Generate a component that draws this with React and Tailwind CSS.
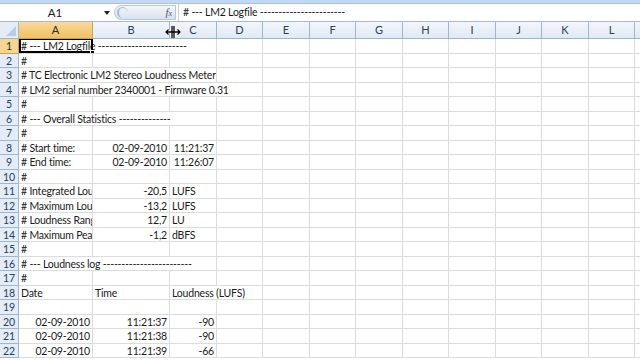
import React from 'react';

const colWidths = [74, 77, 47, 46, 47, 46, 47, 46, 47, 46, 47, 46, 40];
const colNames = ['A', 'B', 'C', 'D', 'E', 'F', 'G', 'H', 'I', 'J', 'K', 'L', ''];

// each row: list of cells { t, span, right }
const rows = [
  [{ t: '# --- LM2 Logfile ------------------------', span: 3, sel: true }],
  [{ t: '#' }],
  [{ t: '# TC Electronic LM2 Stereo Loudness Meter', span: 3 }],
  [{ t: '# LM2 serial number 2340001 - Firmware 0.31', span: 4 }],
  [{ t: '#' }],
  [{ t: '# --- Overall Statistics --------------', span: 3 }],
  [{ t: '#' }],
  [{ t: '# Start time:' }, { t: '02-09-2010', right: true }, { t: '11:21:37', right: true }],
  [{ t: '# End time:' }, { t: '02-09-2010', right: true }, { t: '11:26:07', right: true }],
  [{ t: '#' }],
  [{ t: '# Integrated Loudness' }, { t: '-20,5', right: true }, { t: 'LUFS' }],
  [{ t: '# Maximum Loudness' }, { t: '-13,2', right: true }, { t: 'LUFS' }],
  [{ t: '# Loudness Range' }, { t: '12,7', right: true }, { t: 'LU' }],
  [{ t: '# Maximum Peak' }, { t: '-1,2', right: true }, { t: 'dBFS' }],
  [{ t: '#' }],
  [{ t: '# --- Loudness log ------------------------', span: 3 }],
  [{ t: '#' }],
  [{ t: 'Date' }, { t: 'Time' }, { t: 'Loudness (LUFS)', span: 2 }],
  [],
  [{ t: '02-09-2010', right: true }, { t: '11:21:37', right: true }, { t: '-90', right: true }],
  [{ t: '02-09-2010', right: true }, { t: '11:21:38', right: true }, { t: '-90', right: true }],
  [{ t: '02-09-2010', right: true }, { t: '11:21:39', right: true }, { t: '-66', right: true }],
];

const font = { fontFamily: 'Lato, "Open Sans", sans-serif' };

const ResizeCursor = () => (
  <svg width="16" height="14" viewBox="0 0 16 14" className="absolute left-[165px] top-[25px]">
    <path d="M7 1v12M9 1v12" stroke="#fff" strokeWidth="3" />
    <path d="M1 7h14M3.5 4.5L1 7l2.5 2.5M12.5 4.5L15 7l-2.5 2.5" stroke="#fff" strokeWidth="3" fill="none" />
    <path d="M7 1v12M9 1v12" stroke="#000" strokeWidth="1.3" />
    <path d="M1 7h14M3.5 4.5L1 7l2.5 2.5M12.5 4.5L15 7l-2.5 2.5" stroke="#000" strokeWidth="1.3" fill="none" />
  </svg>
);

const Row = ({ n, cells, h }) => {
  const out = [];
  let col = 0;
  cells.forEach((c, i) => {
    const span = c.span || 1;
    const w = colWidths.slice(col, col + span).reduce((a, b) => a + b, 0);
    out.push(
      <div
        key={i}
        style={{ width: w }}
        className={`relative shrink-0 border-r border-b border-[#dadcdd] px-[2px] overflow-hidden whitespace-nowrap leading-[14px] text-[10.5px] tracking-[-0.2px] text-[#1a1a1a] ${c.right ? 'text-right' : ''}`}
      >
        {c.t}
        {c.sel && (
          <div className="absolute left-0 top-[-1px] w-[74px] h-[calc(100%+1px)] border-2 border-black">
            <div className="absolute right-[-4px] bottom-[-4px] w-[5px] h-[5px] bg-black border border-white" />
          </div>
        )}
      </div>,
    );
    col += span;
  });
  for (; col < colWidths.length; col++) {
    out.push(<div key={'e' + col} style={{ width: colWidths[col] }} className="shrink-0 border-r border-b border-[#dadcdd]" />);
  }
  const active = n === 1;
  return (
    <div className="flex" style={{ height: h }}>
      <div
        className={`w-[19px] shrink-0 border-r border-b text-[10.5px] leading-[14px] text-center ${active ? 'bg-[#f6d68f] border-[#c6a458] text-[#2b2b2b]' : 'bg-[#e4ecf7] border-[#9eb6ce] text-[#27415f]'}`}
      >
        {n}
      </div>
      {out}
    </div>
  );
};

export default function App() {
  return (
    <div className="relative w-[640px] h-[360px] overflow-hidden bg-white" style={font}>
      <div className="h-[4px] bg-[#c4d8ef] border-b border-[#a7c1e0]" />
      <div className="flex h-[18px] bg-white border-b border-[#a5b9d4]">
        <div className="w-[104px] flex items-center justify-center text-[11.5px] text-[#1a1a1a] pl-[6px]">A1</div>
        <div className="w-[10px] flex items-center">
          <svg width="6" height="4" viewBox="0 0 6 4"><path d="M0 0h6L3 4z" fill="#222" /></svg>
        </div>
        <div className="relative w-[62px] h-[15px] mt-[1px] rounded-l-full rounded-r-sm bg-gradient-to-b from-[#f4f7fb] to-[#d8e2ef] border border-[#b6c6da] flex items-center justify-end pr-[3px]">
          <div className="absolute left-[2px] top-[1px] w-[11px] h-[11px] rounded-full border-l-2 border-t border-[#a9b9cd]" />
          <span className="italic text-[11px] text-[#556] leading-none" style={{ fontFamily: '"Liberation Serif", serif' }}>
            f<span className="text-[8px]">x</span>
          </span>
        </div>
        <div className="flex-1 ml-[2px] border-l border-[#c0cde0] pl-[4px] flex items-center text-[10.5px] tracking-[-0.2px] text-[#1a1a1a] whitespace-nowrap overflow-hidden">
          # --- LM2 Logfile -----------------------
        </div>
      </div>
      <div className="flex h-[17px]">
        <div className="relative w-[19px] shrink-0 bg-[#e4ecf7] border-r border-b border-[#9eb6ce]">
          <div className="absolute right-[2px] bottom-[2px] w-0 h-0 border-l-[10px] border-l-transparent border-b-[10px] border-b-[#b8cde4]" />
        </div>
        {colNames.map((c, i) => (
          <div
            key={i}
            style={{ width: colWidths[i] }}
            className={`shrink-0 border-r border-b text-center text-[11px] leading-[16px] ${i === 0 ? 'bg-gradient-to-b from-[#f9d99f] to-[#f1c15f] border-[#c6a458] text-[#2b2b2b]' : 'bg-gradient-to-b from-[#f3f6fb] to-[#e1e9f4] border-[#9eb6ce] text-[#27415f]'}`}
          >
            {c}
          </div>
        ))}
      </div>
      {rows.map((cells, i) => (
        <Row key={i} n={i + 1} cells={cells} h={i % 2 === 0 ? 15 : 14} />
      ))}
      <ResizeCursor />
    </div>
  );
}
